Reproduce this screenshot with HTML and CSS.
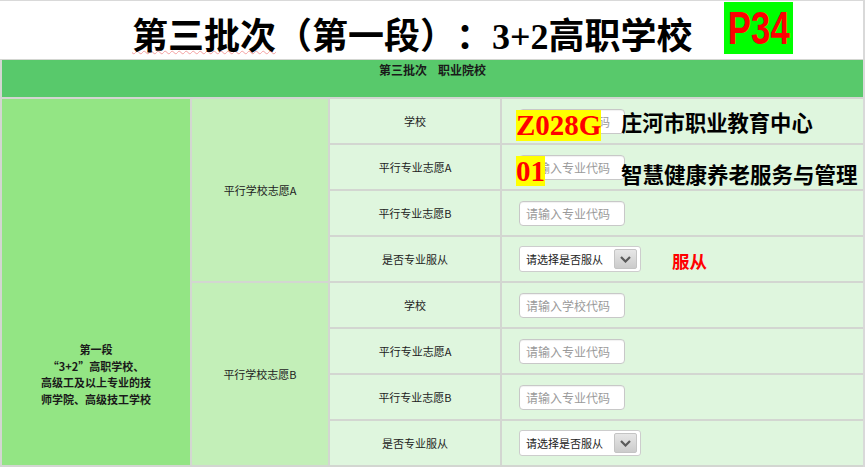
FILE: index.html
```html
<!DOCTYPE html>
<html lang="zh-CN">
<head>
<meta charset="utf-8">
<title>第三批次（第一段）：3+2高职学校</title>
<link rel="stylesheet" href="styles.css">
</head>
<body>
<div class="page">
  <header class="head">
    <h1 class="title"><span class="squig">第三批次</span>（第一段）：<span class="num">3+2</span>高职学校</h1>
    <div class="tag"><span class="tag-text">P34</span></div>
  </header>
  <div class="table">
    <div class="band">第三批次&nbsp;&nbsp;&nbsp;&nbsp;职业院校</div>
    <div class="seg">第一段<br>“3+2”高职学校、<br>高级工及以上专业的技<br>师学院、高级技工学校</div>
    <div class="grp g1">平行学校志愿A</div>
    <div class="grp g2">平行学校志愿B</div>

    <div class="lbl">学校</div>
    <div class="val">
      <div class="inp">请输入学校代码</div>
      <span class="code code-a">Z028G</span>
      <span class="note note-a">庄河市职业教育中心</span>
    </div>
    <div class="lbl">平行专业志愿A</div>
    <div class="val">
      <div class="inp">请输入专业代码</div>
      <span class="code code-b">01</span>
      <span class="note note-b">智慧健康养老服务与管理</span>
    </div>
    <div class="lbl">平行专业志愿B</div>
    <div class="val"><div class="inp">请输入专业代码</div></div>
    <div class="lbl">是否专业服从</div>
    <div class="val">
      <div class="sel"><span class="sel-text">请选择是否服从</span><span class="arrow"><svg width="11" height="7" viewBox="0 0 11 7"><path d="M1 1 L5.5 5.5 L10 1" fill="none" stroke="#5a5a5a" stroke-width="2.2"/></svg></span></div>
      <span class="obey">服从</span>
    </div>

    <div class="lbl">学校</div>
    <div class="val"><div class="inp">请输入学校代码</div></div>
    <div class="lbl">平行专业志愿A</div>
    <div class="val"><div class="inp">请输入专业代码</div></div>
    <div class="lbl">平行专业志愿B</div>
    <div class="val"><div class="inp">请输入专业代码</div></div>
    <div class="lbl">是否专业服从</div>
    <div class="val">
      <div class="sel"><span class="sel-text">请选择是否服从</span><span class="arrow"><svg width="11" height="7" viewBox="0 0 11 7"><path d="M1 1 L5.5 5.5 L10 1" fill="none" stroke="#5a5a5a" stroke-width="2.2"/></svg></span></div>
    </div>
  </div>
</div>
</body>
</html>
```

FILE: styles.css
```css
* { box-sizing: border-box; }
html, body { margin: 0; padding: 0; background: #fff; }
body {
  font-family: "Noto Sans CJK SC", "Noto Sans", sans-serif;
  color: #222;
  text-spacing-trim: space-all;
  font-feature-settings: "halt" 0;
}

.page {
  width: 865px;
  height: 467px;
  overflow: hidden;
  border-top: 1px solid #d9d9d9;
  border-right: 2px solid #d9d9d9;
}

.head {
  height: 58px;
  display: flex;
  align-items: flex-start;
  padding-left: 132px;
}

.title {
  margin: 12px 0 0 0;
  font-size: 36px;
  line-height: 40px;
  font-weight: 700;
  color: #000;
  white-space: nowrap;
  letter-spacing: 0;
  text-spacing-trim: space-all;
}
.squig {
  text-decoration: underline wavy #f4a0a0 1px;
  text-underline-offset: 1px;
}
.num {
  font-family: "Liberation Serif", serif;
  font-weight: 700;
}

.tag {
  margin: 1px 0 0 auto;
  margin-right: 70px;
  width: 69px;
  height: 52px;
  background: #00ff00;
  display: flex;
  align-items: center;
  justify-content: center;
}
.tag-text {
  display: inline-block;
  font-family: "Liberation Sans", sans-serif;
  font-weight: 700;
  font-size: 47px;
  line-height: 52px;
  color: #ff0000;
  transform: scaleX(0.74);
}

.table {
  display: grid;
  grid-template-columns: 188px 136px 170px 1fr;
  grid-template-rows: 37px repeat(8, 44px);
  gap: 2px;
  background: #d3d6d1;
  border-top: 1px solid #d3d6d1;
  border-left: 2px solid #d3d6d1;
  border-bottom: 2px solid #d3d6d1;
}

.band {
  grid-column: 1 / -1;
  background: #58c96b;
  text-align: center;
  font-size: 12px;
  font-weight: 700;
  line-height: 16px;
  padding-top: 2px;
  color: #1a1a1a;
}

.seg {
  grid-column: 1;
  grid-row: 2 / span 8;
  background: #93e584;
  text-align: center;
  font-size: 11px;
  font-weight: 700;
  line-height: 16.5px;
  padding-top: 242px;
  color: #1a1a1a;
}

.grp {
  grid-column: 2;
  background: #c3efb8;
  display: flex;
  align-items: center;
  justify-content: center;
  font-size: 11px;
  color: #222;
}
.g1 { grid-row: 2 / span 4; }
.g2 { grid-row: 6 / span 4; }

.lbl {
  grid-column: 3;
  background: #dff6de;
  display: flex;
  align-items: center;
  justify-content: center;
  font-size: 11px;
  color: #222;
}

.val {
  grid-column: 4;
  background: #dff6de;
  display: flex;
  align-items: center;
  padding-left: 17px;
  position: relative;
}

.inp {
  width: 106px;
  height: 25px;
  background: #fff;
  border: 1px solid #c8c8c8;
  border-radius: 4px;
  box-shadow: inset 0 1px 1px rgba(0,0,0,0.06);
  font-size: 12px;
  line-height: 23px;
  color: #9a9a9a;
  padding-left: 6px;
  white-space: nowrap;
  overflow: hidden;
}

.sel {
  width: 122px;
  height: 26px;
  background: #fff;
  border: 1px solid #cdcdcd;
  border-radius: 3px;
  display: flex;
  align-items: center;
  justify-content: space-between;
  padding: 0 3px 0 6px;
}
.sel-text {
  font-size: 11px;
  color: #222;
  white-space: nowrap;
}
.arrow {
  width: 23px;
  height: 20px;
  border-radius: 2px;
  background: linear-gradient(#e6e6e6, #cbcbcb);
  border: 1px solid #c4c4c4;
  display: flex;
  align-items: center;
  justify-content: center;
}
.arrow svg { display: block; }

.code {
  position: absolute;
  left: 14px;
  top: 11px;
  background: #ffff00;
  color: #ff0000;
  font-family: "Liberation Serif", serif;
  font-weight: 700;
  font-size: 29px;
  line-height: 31px;
  height: 31px;
  padding: 0;
}
.code-b { height: 30px; line-height: 30px; }

.note {
  position: absolute;
  left: 119px;
  color: #000;
  font-weight: 700;
  white-space: nowrap;
}
.note-a { top: 11px; font-size: 21.3px; line-height: 24px; }
.note-b { top: 17px; font-size: 21.5px; line-height: 24px; }

.obey {
  position: absolute;
  left: 170px;
  top: 13px;
  color: #ff0000;
  font-weight: 700;
  font-size: 17.5px;
  line-height: 22px;
}
```
